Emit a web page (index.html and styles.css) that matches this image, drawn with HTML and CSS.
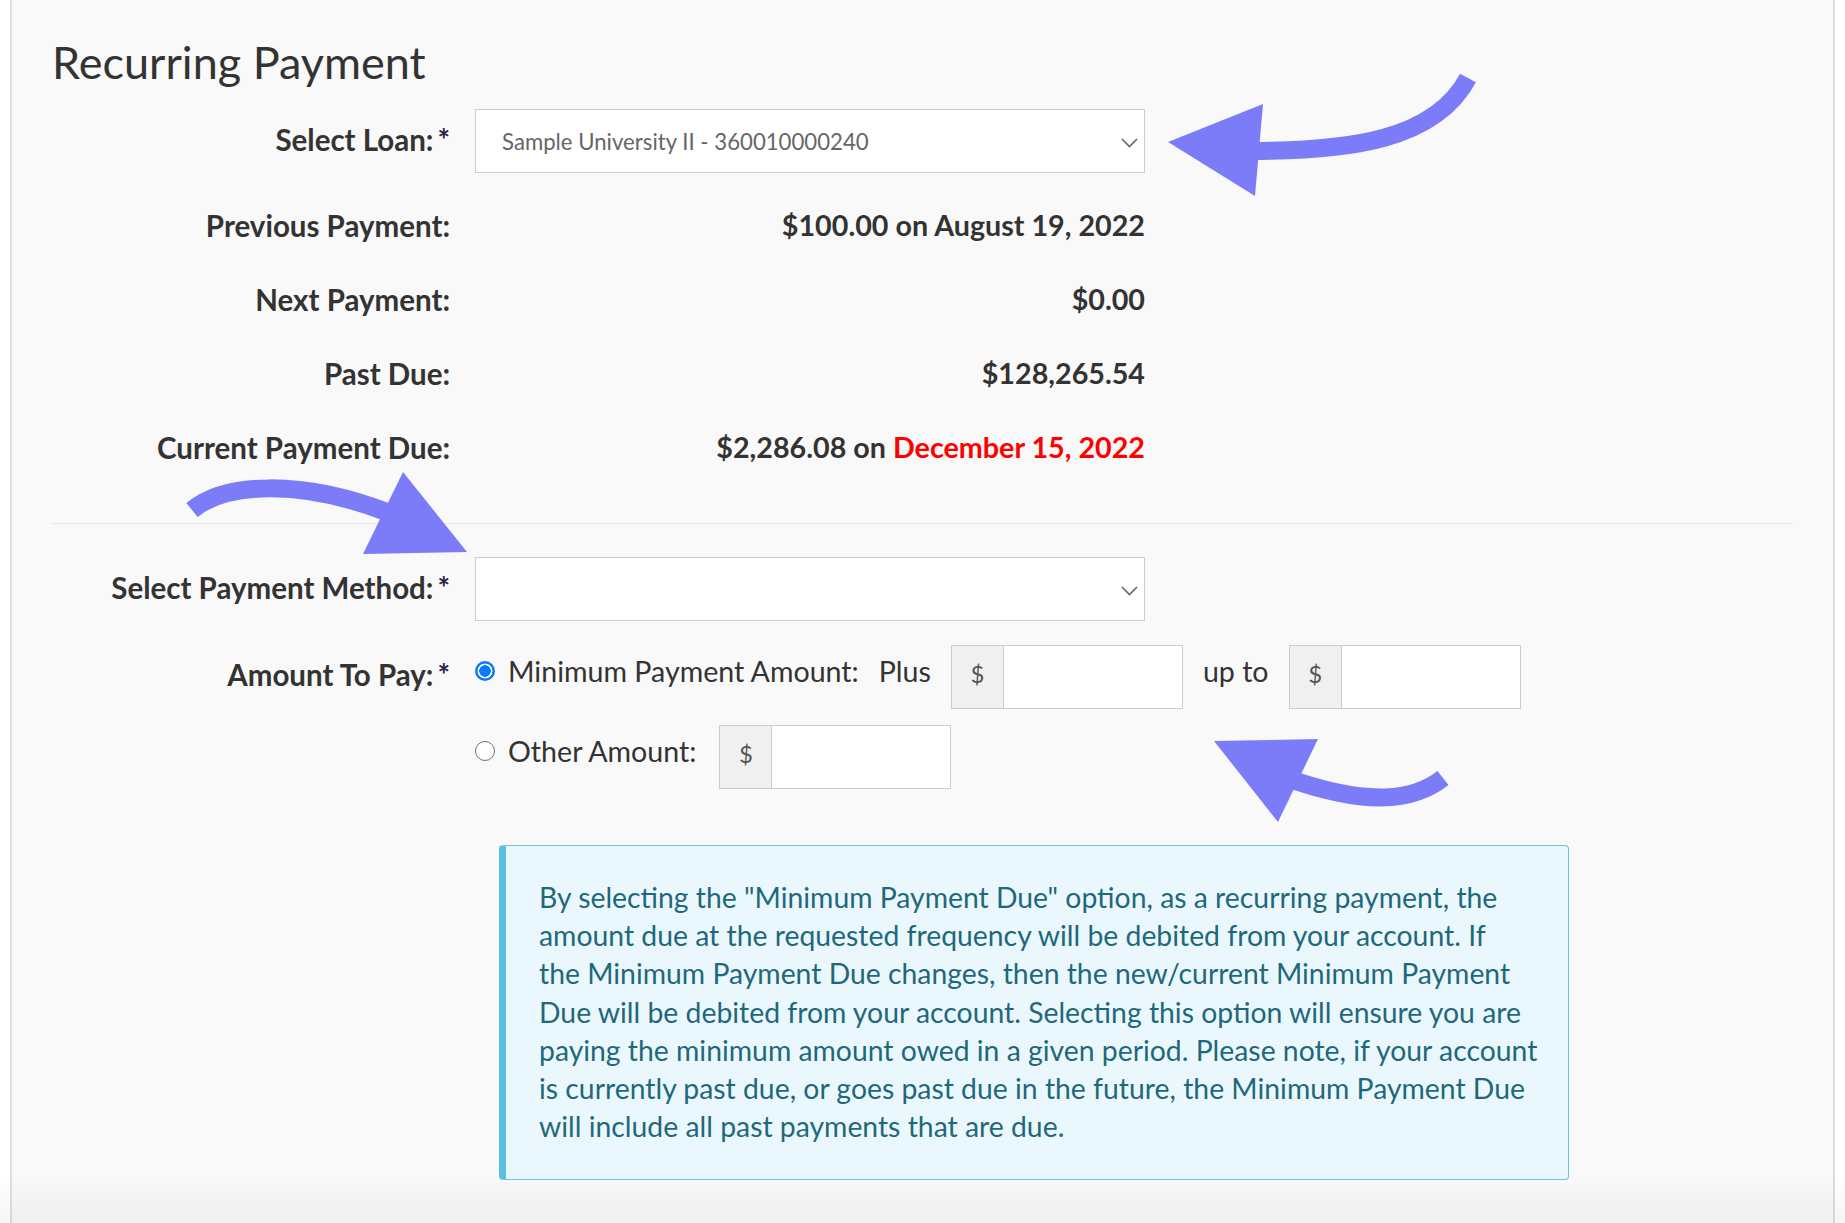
FILE: index.html
```html
<!DOCTYPE html>
<html lang="en">
<head>
<meta charset="utf-8">
<title>Recurring Payment</title>
<link rel="stylesheet" href="styles.css">
</head>
<body>
<div class="panel">
  <h1 class="title">Recurring Payment</h1>
  <form class="form">
    <div class="row row-loan">
      <label class="lbl lift">Select Loan:<span class="req">*</span></label>
      <div class="select">
        <span class="select-text">Sample University II - 360010000240</span>
        <svg class="chev" width="17" height="10" viewBox="0 0 17 10"><polyline points="1,1 8.5,8.5 16,1" fill="none" stroke="#666" stroke-width="1.6"/></svg>
      </div>
    </div>
    <div class="row row-static first">
      <div class="lbl lift">Previous Payment:</div>
      <div class="value lift">$100.00 on August 19, 2022</div>
    </div>
    <div class="row row-static">
      <div class="lbl lift">Next Payment:</div>
      <div class="value lift">$0.00</div>
    </div>
    <div class="row row-static">
      <div class="lbl lift">Past Due:</div>
      <div class="value lift">$128,265.54</div>
    </div>
    <div class="row row-static">
      <div class="lbl lift">Current Payment Due:</div>
      <div class="value lift">$2,286.08 on <span class="red">December 15, 2022</span></div>
    </div>
    <hr class="sep">
    <div class="row row-method">
      <label class="lbl lift">Select Payment Method:<span class="req">*</span></label>
      <div class="select">
        <span class="select-text"></span>
        <svg class="chev" width="17" height="10" viewBox="0 0 17 10"><polyline points="1,1 8.5,8.5 16,1" fill="none" stroke="#666" stroke-width="1.6"/></svg>
      </div>
    </div>
    <div class="row row-amount">
      <label class="lbl">Amount To Pay:<span class="req">*</span></label>
      <div class="opts">
        <label class="radio-label"><input class="radio" type="radio" name="amt" checked> Minimum Payment Amount:</label>
        <span class="word">Plus</span>
        <div class="igroup"><span class="addon">$</span><span class="inp"></span></div>
        <span class="word">up to</span>
        <div class="igroup"><span class="addon">$</span><span class="inp"></span></div>
      </div>
    </div>
    <div class="row row-other">
      <div class="lbl"></div>
      <div class="opts opts-other">
        <label class="radio-label"><input class="radio" type="radio" name="amt"> Other Amount:</label>
        <div class="igroup"><span class="addon">$</span><span class="inp"></span></div>
      </div>
    </div>
    <div class="row row-alert">
      <div class="lbl"></div>
      <div class="alert">By selecting the "Minimum Payment Due" option, as a recurring payment, the<br>amount due at the requested frequency will be debited from your account. If<br>the Minimum Payment Due changes, then the new/current Minimum Payment<br>Due will be debited from your account. Selecting this option will ensure you are<br>paying the minimum amount owed in a given period. Please note, if your account<br>is currently past due, or goes past due in the future, the Minimum Payment Due<br>will include all past payments that are due.</div>
    </div>
  </form>
</div>
<svg class="annotations" width="1845" height="1223" viewBox="0 0 1845 1223">
  <g fill="none" stroke="#7c7cf9" stroke-width="18">
    <path d="M1250,151 C1350,151 1435,140 1468,78"/>
    <path d="M192,510 C225,483 300,478 392,514"/>
    <path d="M1443,778 C1415,800 1370,808 1284,777"/>
  </g>
  <g fill="#7c7cf9">
    <polygon points="1168,142 1263,104 1255,196"/>
    <polygon points="403,472 363,554 467,552"/>
    <polygon points="1214,741 1318,739 1278,822"/>
  </g>
</svg>
</body>
</html>
```

FILE: styles.css
```css
* { box-sizing: border-box; }

html, body { margin: 0; padding: 0; }

body {
  position: relative;
  width: 1845px;
  height: 1223px;
  overflow: hidden;
  background: #ffffff;
  font-family: Lato, "Noto Sans", sans-serif;
  color: #333333;
}

body::after {
  content: "";
  position: absolute;
  left: 0;
  right: 0;
  bottom: 0;
  height: 48px;
  background: linear-gradient(to bottom, rgba(0,0,0,0), rgba(0,0,0,0.04));
  pointer-events: none;
}

.panel {
  margin-left: 10px;
  width: 1825px;
  height: 1223px;
  background: #f9f9f9;
  border-left: 2px solid #dedede;
  border-right: 2px solid #dedede;
  padding: 37px 40px 0 40px;
}

.title {
  margin: 0 0 22px;
  font-size: 45px;
  font-weight: 400;
  line-height: 50px;
  color: #333333;
}

.form { margin: 0; }

.row {
  display: grid;
  grid-template-columns: 398px 1fr;
  column-gap: 25px;
  align-items: center;
}

.lbl {
  font-weight: 700;
  font-size: 29.5px;
  text-align: right;
  white-space: nowrap;
  color: #333333;
}

.lift { padding-bottom: 4px; }

.req {
  color: #23234d;
  margin-left: 4px;
}

.select {
  width: 670px;
  height: 64px;
  background: #ffffff;
  border: 1px solid #cdcdcd;
  display: flex;
  align-items: center;
  padding-left: 26px;
  padding-right: 6px;
  font-size: 22.2px;
  color: #666666;
}

.select-text { flex: 1; }

.chev { margin-top: 3px; }

.row-static { height: 74px; }
.row-static.first { margin-top: 17px; }

.value {
  width: 670px;
  text-align: right;
  font-weight: 700;
  font-size: 28.7px;
  color: #333333;
}

.red { color: #ff0000; }

.sep {
  margin: 37px 0 33px;
  border: 0;
  border-top: 1px solid #e8e8e8;
  height: 0;
}

.row-amount { margin-top: 18px; }
.row-other { margin-top: 10px; }
.row-alert { margin-top: 56px; }

.opts {
  display: flex;
  align-items: center;
  gap: 20px;
  font-size: 28.6px;
  color: #333333;
}

.opts-other { gap: 23px; }

.radio-label,
.word {
  display: flex;
  align-items: center;
  gap: 13px;
  white-space: nowrap;
  margin-bottom: 6px;
}

.radio {
  -webkit-appearance: none;
  appearance: none;
  width: 20px;
  height: 20px;
  margin: 0;
  border-radius: 50%;
  border: 1.6px solid #6f6f6f;
  background: #ffffff;
}

.radio:checked {
  border: none;
  background: radial-gradient(circle, #0a7bff 0 5.5px, #ffffff 6px 7.2px, #0a7bff 7.7px);
}

.igroup {
  display: flex;
  height: 64px;
  margin-top: 6px;
}

.addon {
  width: 53px;
  background: #f0f0f0;
  border: 1px solid #cccccc;
  display: flex;
  align-items: center;
  justify-content: center;
  padding-bottom: 8px;
  font-size: 24px;
  color: #555555;
}

.inp {
  width: 179px;
  background: #ffffff;
  border: 1px solid #cccccc;
  border-left: 0;
}

.alert {
  width: 1070px;
  margin-left: 24px;
  background: #eaf8fd;
  border: 1px solid #6cc3dc;
  border-left: 7px solid #5bc0de;
  border-radius: 4px;
  padding: 32px 16px 34px 33px;
  font-size: 28.35px;
  line-height: 38.2px;
  color: #1f687c;
  white-space: nowrap;
}

.annotations {
  position: absolute;
  left: 0;
  top: 0;
  pointer-events: none;
}
```
